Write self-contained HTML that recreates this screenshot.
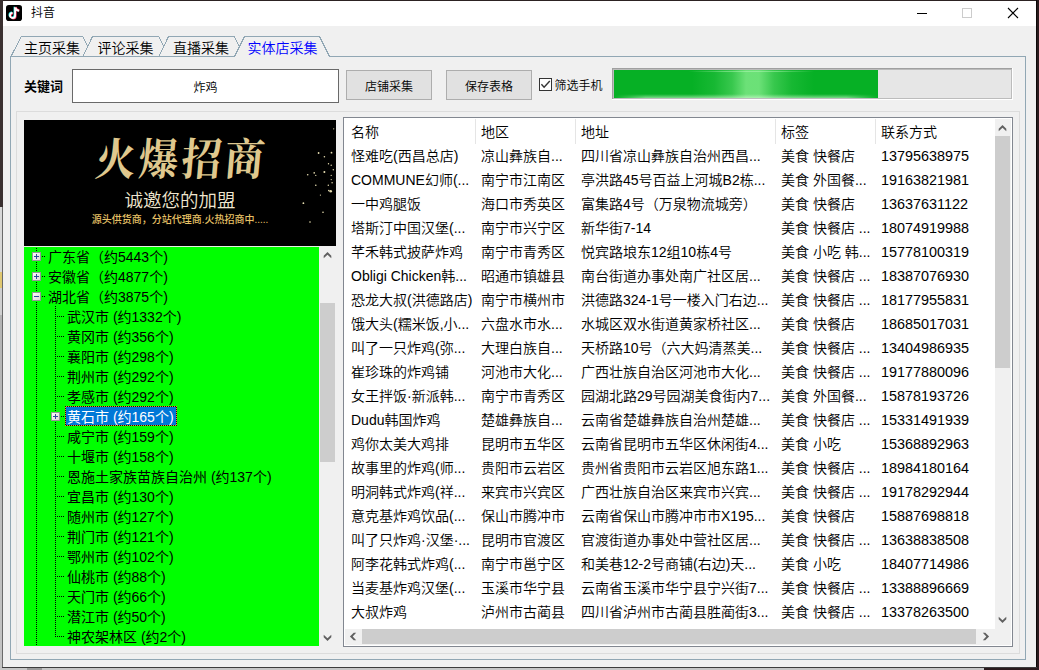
<!DOCTYPE html>
<html lang="zh-CN"><head><meta charset="utf-8"><title>抖音</title>
<style>
html,body{margin:0;padding:0}
body{width:1039px;height:670px;overflow:hidden;position:relative;background:#f0f0f0;
 font-family:"Liberation Sans","Noto Sans CJK SC",sans-serif;color:#000;font-size:12px;font-weight:350}
.a{position:absolute}
.t{position:absolute;white-space:nowrap;overflow:hidden}
.tab{font-size:14px;line-height:20px;height:20px;top:38px}
.btn{background:#e1e1e1;border:1px solid #adadad;box-sizing:border-box;text-align:center;font-size:12px;line-height:32px;height:30px;top:70px;width:86px;overflow:hidden}
.lv{font-size:14px;line-height:24px;height:24px}
.tr{font-size:14px;line-height:20px;height:20px;font-weight:400}
</style></head><body>

<div class="a" style="left:0;top:0;width:1039px;height:1px;background:#2c2222"></div>
<div class="a" style="left:0;top:0;width:3px;height:207px;background:#3a3030"></div>
<div class="a" style="left:0;top:207px;width:2px;height:463px;background:linear-gradient(#d8d8d8 0,#d8d8d8 65px,#e0c870 65px,#e0c870 81px,#d0d0d0 81px,#d0d0d0 108px,#b4b4b4 108px,#c4c4c4 100%)"></div>
<div class="a" style="left:2px;top:207px;width:1px;height:461px;background:#6a6a6a"></div>
<div class="a" style="left:1036px;top:0;width:1px;height:668px;background:#0c0808"></div>
<div class="a" style="left:1037px;top:0;width:2px;height:670px;background:#2a1a1c"></div>
<div class="a" style="left:2px;top:667px;width:1035px;height:1px;background:#3c3c3c"></div>
<div class="a" style="left:0;top:668px;width:984px;height:2px;background:#c6c6c6"></div>
<div class="a" style="left:27px;top:668px;width:15px;height:2px;background:#9a9a9a"></div>
<div class="a" style="left:984px;top:668px;width:55px;height:2px;background:#2a1a1c"></div>
<div class="a" style="left:3px;top:1px;width:1033px;height:25px;background:#fff"></div>
<svg class="a" style="left:6px;top:5px" width="16" height="16" viewBox="0 0 16 16"><rect width="16" height="16" rx="2.8" fill="#000"/>
<g fill="none" stroke-width="1.9" stroke-linecap="butt">
<path d="M9.1 2.2V10.4a2.55 2.55 0 1 1-2.55-2.55" stroke="#25f4ee" transform="translate(-0.6,-0.5)"/>
<path d="M9.1 2.2V10.4a2.55 2.55 0 1 1-2.55-2.55" stroke="#fe2c55" transform="translate(0.6,0.5)"/>
<path d="M9.1 2.2V10.4a2.55 2.55 0 1 1-2.55-2.55" stroke="#fff"/>
<path d="M9.3 2.5c.4 2 1.7 3.2 3.8 3.3" stroke="#fe2c55" transform="translate(0.4,-0.5)"/>
<path d="M9.3 2.5c.4 2 1.7 3.2 3.8 3.3" stroke="#fff"/>
</g></svg>
<div class="t" style="left:31px;top:4px;font-size:12px;line-height:18px;height:18px">抖音</div>
<svg class="a" style="left:900px;top:1px" width="136" height="25" viewBox="0 0 136 25" shape-rendering="crispEdges">
<rect x="17" y="12" width="10" height="1" fill="#000"/>
<rect x="62.5" y="7.5" width="9" height="9" fill="none" stroke="#ccc" stroke-width="1"/>
<g shape-rendering="geometricPrecision" stroke="#000" stroke-width="1.1"><path d="M108 7L118 17M118 7L108 17"/></g>
</svg>
<div class="a" style="left:10px;top:56px;width:1014px;height:602px;border:1px solid #91a7b4"></div>
<div class="a" style="left:235px;top:56px;width:94px;height:1px;background:#f0f0f0"></div>
<svg class="a" style="left:0;top:30px" width="340" height="30" viewBox="0 30 340 30" fill="none" stroke="#91a7b4" stroke-width="1" shape-rendering="crispEdges">
<path d="M11 56.5L21.2 36.5H82.7L87.6 46"/>
<path d="M83 56.5L92.5 36.5H158.7L163.5 46"/>
<path d="M159 56.5L168.5 36.5H234.2L239 46"/>
<path d="M234.5 56.5L244.5 36.5H319.5L329.5 56.5"/>
</svg>
<div class="t tab" style="left:24px">主页采集</div>
<div class="t tab" style="left:97.5px">评论采集</div>
<div class="t tab" style="left:173px">直播采集</div>
<div class="t tab" style="left:247.5px;color:#0000ff">实体店采集</div>
<div class="t" style="left:24px;top:77px;font-size:13px;font-weight:bold;line-height:20px;height:20px">关键词</div>
<div class="a" style="left:72px;top:69px;width:265px;height:32px;border:1px solid #696969;background:#fff;text-align:center;font-size:12px;line-height:36px;height:32px;overflow:hidden">炸鸡</div>
<div class="a btn" style="left:346px">店铺采集</div>
<div class="a btn" style="left:446px">保存表格</div>
<svg class="a" style="left:539px;top:78px" width="13" height="13" viewBox="0 0 13 13"><rect x=".5" y=".5" width="12" height="12" fill="#fff" stroke="#333"/><path d="M2.4 6.3L5.1 9.2L10.8 3" fill="none" stroke="#333" stroke-width="1.4"/></svg>
<div class="t" style="left:554.5px;top:77px;font-size:12px;line-height:18px;height:18px">筛选手机</div>
<div class="a" style="left:612px;top:68px;width:401px;height:32px;background:#fff"></div>
<div class="a" style="left:612px;top:68px;width:400px;height:31px;background:#a0a0a0"></div>
<div class="a" style="left:613px;top:69px;width:397px;height:28px;border:1px solid #bcbcbc;background:#e6e6e6"></div>
<div class="a" style="left:614px;top:70px;width:264px;height:28px;background:#06b025"></div>
<div class="a" style="left:614px;top:70px;width:264px;height:28px;background:linear-gradient(90deg,rgba(170,255,170,0) 78px,rgba(170,255,170,.1) 100px,rgba(170,255,170,.3) 118px,rgba(170,255,170,.62) 132px,rgba(170,255,170,.62) 145px,rgba(170,255,170,.3) 160px,rgba(170,255,170,.1) 178px,rgba(170,255,170,0) 200px)"></div>
<div class="a" style="left:614px;top:94px;width:264px;height:4px;background:linear-gradient(180deg,rgba(220,255,220,0),rgba(220,255,220,.55));-webkit-mask-image:linear-gradient(90deg,transparent,#000 12%,#000 88%,transparent)"></div>
<div class="a" style="left:614px;top:71px;width:264px;height:1px;background:rgba(200,255,200,.4);-webkit-mask-image:linear-gradient(90deg,transparent 28%,#000 42%,#000 62%,transparent 76%)"></div>
<div class="a" style="left:16px;top:111px;width:1002px;height:541px;border:1px solid #dcdcdc"></div>
<div class="a" style="left:24px;top:120px;width:312px;height:126px;background:#000;overflow:hidden">
<div class="t" style="left:0;width:312px;text-align:center;top:13px;height:56px;line-height:56px;font-size:40px;letter-spacing:3px;text-indent:3px;font-family:'Liberation Serif','Noto Serif CJK SC',serif;font-weight:700;color:#dfc88e;transform:skewX(-5deg) scaleY(1.1)">火爆招商</div>
<div class="t" style="left:0;width:312px;text-align:center;top:69px;height:24px;line-height:24px;font-size:18.5px;color:#efe6cf">诚邀您的加盟</div>
<div class="t" style="left:0;width:312px;text-align:center;top:92px;height:16px;line-height:16px;font-size:10px;font-weight:500;color:#e6c066">源头供货商，分站代理商.火热招商中.....</div>
<svg class="a" style="left:0;top:0" width="312" height="126" viewBox="0 0 312 126" fill="#e6ddb0"><circle cx="309.7" cy="8.8" r="0.6"/><circle cx="294.6" cy="33" r="0.9"/><circle cx="307.5" cy="32.7" r="0.9"/><circle cx="300.4" cy="36.8" r="0.8"/><circle cx="304.5" cy="43.8" r="0.7"/><circle cx="307.2" cy="45.2" r="0.7"/><circle cx="309.3" cy="49.7" r="0.7"/><circle cx="300.4" cy="52" r="1.0"/><circle cx="290.2" cy="52.9" r="0.8"/><circle cx="291.8" cy="55.4" r="0.6"/><circle cx="283.7" cy="54.7" r="0.8"/><circle cx="307.2" cy="55.4" r="0.6"/><circle cx="307.2" cy="59.6" r="0.6"/><circle cx="308.1" cy="62.8" r="0.7"/><circle cx="304.3" cy="65.3" r="0.7"/><circle cx="291.8" cy="65.3" r="0.8"/><circle cx="306.7" cy="71.2" r="1.3"/><circle cx="304.8" cy="70.6" r="0.8"/><circle cx="296.4" cy="75.1" r="0.6"/><circle cx="279.4" cy="83.2" r="0.9"/><circle cx="299" cy="92.2" r="0.8"/><circle cx="286" cy="102" r="0.8"/></svg>
</div>
<div class="a" style="left:24px;top:246px;width:295px;height:400px;background:#00ff00;overflow:hidden">
<div class="a" style="left:0;top:0;width:295px;height:1px;background:#e8f0e0"></div>
<div class="a" style="left:12px;top:2px;width:1px;height:398px;background:repeating-linear-gradient(180deg,#000 0,#000 1px,transparent 1px,transparent 2px)"></div>
<div class="a" style="left:31px;top:60px;width:1px;height:331px;background:repeating-linear-gradient(180deg,#000 0,#000 1px,transparent 1px,transparent 2px)"></div>
<div class="a" style="left:18px;top:10px;width:3px;height:1px;background:repeating-linear-gradient(90deg,#000 0,#000 1px,transparent 1px,transparent 2px)"></div>
<svg class="a" style="left:8px;top:6px" width="9" height="9" viewBox="0 0 9 9" shape-rendering="crispEdges"><defs><linearGradient id="bg0" x1="0" y1="0" x2="1" y2="1"><stop offset="0" stop-color="#fff"/><stop offset="1" stop-color="#d9d6d2"/></linearGradient></defs><rect x=".5" y=".5" width="8" height="8" fill="url(#bg0)" stroke="#979797"/><rect x="2" y="4" width="5" height="1" fill="#2f4a9c"/><rect x="4" y="2" width="1" height="5" fill="#2f4a9c"/></svg>
<div class="t tr" style="left:24px;top:1px">广东省（约5443个)</div>
<div class="a" style="left:18px;top:30px;width:3px;height:1px;background:repeating-linear-gradient(90deg,#000 0,#000 1px,transparent 1px,transparent 2px)"></div>
<svg class="a" style="left:8px;top:26px" width="9" height="9" viewBox="0 0 9 9" shape-rendering="crispEdges"><defs><linearGradient id="bg1" x1="0" y1="0" x2="1" y2="1"><stop offset="0" stop-color="#fff"/><stop offset="1" stop-color="#d9d6d2"/></linearGradient></defs><rect x=".5" y=".5" width="8" height="8" fill="url(#bg1)" stroke="#979797"/><rect x="2" y="4" width="5" height="1" fill="#2f4a9c"/><rect x="4" y="2" width="1" height="5" fill="#2f4a9c"/></svg>
<div class="t tr" style="left:24px;top:21px">安徽省（约4877个)</div>
<div class="a" style="left:18px;top:50px;width:3px;height:1px;background:repeating-linear-gradient(90deg,#000 0,#000 1px,transparent 1px,transparent 2px)"></div>
<svg class="a" style="left:8px;top:46px" width="9" height="9" viewBox="0 0 9 9" shape-rendering="crispEdges"><defs><linearGradient id="bg2" x1="0" y1="0" x2="1" y2="1"><stop offset="0" stop-color="#fff"/><stop offset="1" stop-color="#d9d6d2"/></linearGradient></defs><rect x=".5" y=".5" width="8" height="8" fill="url(#bg2)" stroke="#979797"/><rect x="2" y="4" width="5" height="1" fill="#2f4a9c"/></svg>
<div class="t tr" style="left:24px;top:41px">湖北省（约3875个)</div>
<div class="a" style="left:33px;top:70px;width:7px;height:1px;background:repeating-linear-gradient(90deg,#000 0,#000 1px,transparent 1px,transparent 2px)"></div>
<div class="t tr" style="left:43px;top:61px">武汉市 (约1332个)</div>
<div class="a" style="left:33px;top:90px;width:7px;height:1px;background:repeating-linear-gradient(90deg,#000 0,#000 1px,transparent 1px,transparent 2px)"></div>
<div class="t tr" style="left:43px;top:81px">黄冈市 (约356个)</div>
<div class="a" style="left:33px;top:110px;width:7px;height:1px;background:repeating-linear-gradient(90deg,#000 0,#000 1px,transparent 1px,transparent 2px)"></div>
<div class="t tr" style="left:43px;top:101px">襄阳市 (约298个)</div>
<div class="a" style="left:33px;top:130px;width:7px;height:1px;background:repeating-linear-gradient(90deg,#000 0,#000 1px,transparent 1px,transparent 2px)"></div>
<div class="t tr" style="left:43px;top:121px">荆州市 (约292个)</div>
<div class="a" style="left:33px;top:150px;width:7px;height:1px;background:repeating-linear-gradient(90deg,#000 0,#000 1px,transparent 1px,transparent 2px)"></div>
<div class="t tr" style="left:43px;top:141px">孝感市 (约292个)</div>
<div class="a" style="left:33px;top:170px;width:7px;height:1px;background:repeating-linear-gradient(90deg,#000 0,#000 1px,transparent 1px,transparent 2px)"></div>
<svg class="a" style="left:27px;top:166px" width="9" height="9" viewBox="0 0 9 9" shape-rendering="crispEdges"><defs><linearGradient id="bg8" x1="0" y1="0" x2="1" y2="1"><stop offset="0" stop-color="#fff"/><stop offset="1" stop-color="#d9d6d2"/></linearGradient></defs><rect x=".5" y=".5" width="8" height="8" fill="url(#bg8)" stroke="#979797"/><rect x="2" y="4" width="5" height="1" fill="#2f4a9c"/><rect x="4" y="2" width="1" height="5" fill="#2f4a9c"/></svg>
<div class="a" style="left:41px;top:160px;width:112px;height:20px;background:repeating-conic-gradient(#e8912c 0 25%,#181008 0 50%) 0 0/2px 2px"><div class="t tr" style="left:1px;top:1px;width:109px;height:18px;line-height:20px;background:#0078d7;color:#fff;padding-left:1px">黄石市 (约165个)</div></div>
<div class="a" style="left:33px;top:190px;width:7px;height:1px;background:repeating-linear-gradient(90deg,#000 0,#000 1px,transparent 1px,transparent 2px)"></div>
<div class="t tr" style="left:43px;top:181px">咸宁市 (约159个)</div>
<div class="a" style="left:33px;top:210px;width:7px;height:1px;background:repeating-linear-gradient(90deg,#000 0,#000 1px,transparent 1px,transparent 2px)"></div>
<div class="t tr" style="left:43px;top:201px">十堰市 (约158个)</div>
<div class="a" style="left:33px;top:230px;width:7px;height:1px;background:repeating-linear-gradient(90deg,#000 0,#000 1px,transparent 1px,transparent 2px)"></div>
<div class="t tr" style="left:43px;top:221px">恩施土家族苗族自治州 (约137个)</div>
<div class="a" style="left:33px;top:250px;width:7px;height:1px;background:repeating-linear-gradient(90deg,#000 0,#000 1px,transparent 1px,transparent 2px)"></div>
<div class="t tr" style="left:43px;top:241px">宜昌市 (约130个)</div>
<div class="a" style="left:33px;top:270px;width:7px;height:1px;background:repeating-linear-gradient(90deg,#000 0,#000 1px,transparent 1px,transparent 2px)"></div>
<div class="t tr" style="left:43px;top:261px">随州市 (约127个)</div>
<div class="a" style="left:33px;top:290px;width:7px;height:1px;background:repeating-linear-gradient(90deg,#000 0,#000 1px,transparent 1px,transparent 2px)"></div>
<div class="t tr" style="left:43px;top:281px">荆门市 (约121个)</div>
<div class="a" style="left:33px;top:310px;width:7px;height:1px;background:repeating-linear-gradient(90deg,#000 0,#000 1px,transparent 1px,transparent 2px)"></div>
<div class="t tr" style="left:43px;top:301px">鄂州市 (约102个)</div>
<div class="a" style="left:33px;top:330px;width:7px;height:1px;background:repeating-linear-gradient(90deg,#000 0,#000 1px,transparent 1px,transparent 2px)"></div>
<div class="t tr" style="left:43px;top:321px">仙桃市 (约88个)</div>
<div class="a" style="left:33px;top:350px;width:7px;height:1px;background:repeating-linear-gradient(90deg,#000 0,#000 1px,transparent 1px,transparent 2px)"></div>
<div class="t tr" style="left:43px;top:341px">天门市 (约66个)</div>
<div class="a" style="left:33px;top:370px;width:7px;height:1px;background:repeating-linear-gradient(90deg,#000 0,#000 1px,transparent 1px,transparent 2px)"></div>
<div class="t tr" style="left:43px;top:361px">潜江市 (约50个)</div>
<div class="a" style="left:33px;top:390px;width:7px;height:1px;background:repeating-linear-gradient(90deg,#000 0,#000 1px,transparent 1px,transparent 2px)"></div>
<div class="t tr" style="left:43px;top:381px">神农架林区 (约2个)</div>
</div>
<div class="a" style="left:319px;top:246px;width:17px;height:400px;background:#f0f0f0"></div>
<div class="a" style="left:320px;top:303px;width:15px;height:159px;background:#cdcdcd"></div>
<svg class="a" style="left:323px;top:251px" width="9" height="9" viewBox="0 0 9 9"><polygon points="0.7,4.7 4.5,0.9 8.3,4.7 8.3,7.2 4.5,3.7 0.7,7.2" fill="#606060"/></svg>
<svg class="a" style="left:323px;top:634px" width="9" height="9" viewBox="0 0 9 9"><polygon points="0.7,0.8 4.5,4.3 8.3,0.8 8.3,3.3 4.5,7.1 0.7,3.3" fill="#606060"/></svg>
<div class="a" style="left:343px;top:117px;width:668px;height:528px;border:1px solid #828790;background:#fff"></div>
<div class="t lv" style="left:351px;top:120px;width:122px">名称</div>
<div class="t lv" style="left:481px;top:120px;width:92px">地区</div>
<div class="t lv" style="left:581px;top:120px;width:192px">地址</div>
<div class="t lv" style="left:781px;top:120px;width:92px">标签</div>
<div class="t lv" style="left:881px;top:120px;width:110px">联系方式</div>
<div class="a" style="left:475px;top:119px;width:1px;height:25px;background:#e5e5e5"></div>
<div class="a" style="left:575px;top:119px;width:1px;height:25px;background:#e5e5e5"></div>
<div class="a" style="left:775px;top:119px;width:1px;height:25px;background:#e5e5e5"></div>
<div class="a" style="left:875px;top:119px;width:1px;height:25px;background:#e5e5e5"></div>
<div class="t lv" style="left:351px;top:144px;width:122px">怪难吃(西昌总店)</div>
<div class="t lv" style="left:481px;top:144px;width:92px">凉山彝族自...</div>
<div class="t lv" style="left:581px;top:144px;width:192px">四川省凉山彝族自治州西昌...</div>
<div class="t lv" style="left:781px;top:144px;width:92px">美食 快餐店</div>
<div class="t lv" style="left:881px;top:144px;width:110px;font-size:14.4px">13795638975</div>
<div class="t lv" style="left:351px;top:168px;width:122px">COMMUNE幻师(...</div>
<div class="t lv" style="left:481px;top:168px;width:92px">南宁市江南区</div>
<div class="t lv" style="left:581px;top:168px;width:192px">亭洪路45号百益上河城B2栋...</div>
<div class="t lv" style="left:781px;top:168px;width:92px">美食 外国餐...</div>
<div class="t lv" style="left:881px;top:168px;width:110px;font-size:14.4px">19163821981</div>
<div class="t lv" style="left:351px;top:192px;width:122px">一中鸡腿饭</div>
<div class="t lv" style="left:481px;top:192px;width:92px">海口市秀英区</div>
<div class="t lv" style="left:581px;top:192px;width:192px">富集路4号（万泉物流城旁）</div>
<div class="t lv" style="left:781px;top:192px;width:92px">美食 快餐店</div>
<div class="t lv" style="left:881px;top:192px;width:110px;font-size:14.4px">13637631122</div>
<div class="t lv" style="left:351px;top:216px;width:122px">塔斯汀中国汉堡(...</div>
<div class="t lv" style="left:481px;top:216px;width:92px">南宁市兴宁区</div>
<div class="t lv" style="left:581px;top:216px;width:192px">新华街7-14</div>
<div class="t lv" style="left:781px;top:216px;width:92px">美食 快餐店 ...</div>
<div class="t lv" style="left:881px;top:216px;width:110px;font-size:14.4px">18074919988</div>
<div class="t lv" style="left:351px;top:240px;width:122px">芊禾韩式披萨炸鸡</div>
<div class="t lv" style="left:481px;top:240px;width:92px">南宁市青秀区</div>
<div class="t lv" style="left:581px;top:240px;width:192px">悦宾路埌东12组10栋4号</div>
<div class="t lv" style="left:781px;top:240px;width:92px">美食 小吃 韩...</div>
<div class="t lv" style="left:881px;top:240px;width:110px;font-size:14.4px">15778100319</div>
<div class="t lv" style="left:351px;top:264px;width:122px">Obligi Chicken韩...</div>
<div class="t lv" style="left:481px;top:264px;width:92px">昭通市镇雄县</div>
<div class="t lv" style="left:581px;top:264px;width:192px">南台街道办事处南广社区居...</div>
<div class="t lv" style="left:781px;top:264px;width:92px">美食 快餐店 ...</div>
<div class="t lv" style="left:881px;top:264px;width:110px;font-size:14.4px">18387076930</div>
<div class="t lv" style="left:351px;top:288px;width:122px">恐龙大叔(洪德路店)</div>
<div class="t lv" style="left:481px;top:288px;width:92px">南宁市横州市</div>
<div class="t lv" style="left:581px;top:288px;width:192px">洪德路324-1号一楼入门右边...</div>
<div class="t lv" style="left:781px;top:288px;width:92px">美食 快餐店 ...</div>
<div class="t lv" style="left:881px;top:288px;width:110px;font-size:14.4px">18177955831</div>
<div class="t lv" style="left:351px;top:312px;width:122px">饿大头(糯米饭,小...</div>
<div class="t lv" style="left:481px;top:312px;width:92px">六盘水市水...</div>
<div class="t lv" style="left:581px;top:312px;width:192px">水城区双水街道黄家桥社区...</div>
<div class="t lv" style="left:781px;top:312px;width:92px">美食 快餐店</div>
<div class="t lv" style="left:881px;top:312px;width:110px;font-size:14.4px">18685017031</div>
<div class="t lv" style="left:351px;top:336px;width:122px">叫了一只炸鸡(弥...</div>
<div class="t lv" style="left:481px;top:336px;width:92px">大理白族自...</div>
<div class="t lv" style="left:581px;top:336px;width:192px">天桥路10号（六大妈清蒸美...</div>
<div class="t lv" style="left:781px;top:336px;width:92px">美食 快餐店 ...</div>
<div class="t lv" style="left:881px;top:336px;width:110px;font-size:14.4px">13404986935</div>
<div class="t lv" style="left:351px;top:360px;width:122px">崔珍珠的炸鸡铺</div>
<div class="t lv" style="left:481px;top:360px;width:92px">河池市大化...</div>
<div class="t lv" style="left:581px;top:360px;width:192px">广西壮族自治区河池市大化...</div>
<div class="t lv" style="left:781px;top:360px;width:92px">美食 快餐店 ...</div>
<div class="t lv" style="left:881px;top:360px;width:110px;font-size:14.4px">19177880096</div>
<div class="t lv" style="left:351px;top:384px;width:122px">女王拌饭·新派韩...</div>
<div class="t lv" style="left:481px;top:384px;width:92px">南宁市青秀区</div>
<div class="t lv" style="left:581px;top:384px;width:192px">园湖北路29号园湖美食街内7...</div>
<div class="t lv" style="left:781px;top:384px;width:92px">美食 外国餐...</div>
<div class="t lv" style="left:881px;top:384px;width:110px;font-size:14.4px">15878193726</div>
<div class="t lv" style="left:351px;top:408px;width:122px">Dudu韩国炸鸡</div>
<div class="t lv" style="left:481px;top:408px;width:92px">楚雄彝族自...</div>
<div class="t lv" style="left:581px;top:408px;width:192px">云南省楚雄彝族自治州楚雄...</div>
<div class="t lv" style="left:781px;top:408px;width:92px">美食 快餐店 ...</div>
<div class="t lv" style="left:881px;top:408px;width:110px;font-size:14.4px">15331491939</div>
<div class="t lv" style="left:351px;top:432px;width:122px">鸡你太美大鸡排</div>
<div class="t lv" style="left:481px;top:432px;width:92px">昆明市五华区</div>
<div class="t lv" style="left:581px;top:432px;width:192px">云南省昆明市五华区休闲街4...</div>
<div class="t lv" style="left:781px;top:432px;width:92px">美食 小吃</div>
<div class="t lv" style="left:881px;top:432px;width:110px;font-size:14.4px">15368892963</div>
<div class="t lv" style="left:351px;top:456px;width:122px">故事里的炸鸡(师...</div>
<div class="t lv" style="left:481px;top:456px;width:92px">贵阳市云岩区</div>
<div class="t lv" style="left:581px;top:456px;width:192px">贵州省贵阳市云岩区旭东路1...</div>
<div class="t lv" style="left:781px;top:456px;width:92px">美食 快餐店 ...</div>
<div class="t lv" style="left:881px;top:456px;width:110px;font-size:14.4px">18984180164</div>
<div class="t lv" style="left:351px;top:480px;width:122px">明洞韩式炸鸡(祥...</div>
<div class="t lv" style="left:481px;top:480px;width:92px">来宾市兴宾区</div>
<div class="t lv" style="left:581px;top:480px;width:192px">广西壮族自治区来宾市兴宾...</div>
<div class="t lv" style="left:781px;top:480px;width:92px">美食 快餐店 ...</div>
<div class="t lv" style="left:881px;top:480px;width:110px;font-size:14.4px">19178292944</div>
<div class="t lv" style="left:351px;top:504px;width:122px">意克基炸鸡饮品(...</div>
<div class="t lv" style="left:481px;top:504px;width:92px">保山市腾冲市</div>
<div class="t lv" style="left:581px;top:504px;width:192px">云南省保山市腾冲市市X195...</div>
<div class="t lv" style="left:781px;top:504px;width:92px">美食 快餐店</div>
<div class="t lv" style="left:881px;top:504px;width:110px;font-size:14.4px">15887698818</div>
<div class="t lv" style="left:351px;top:528px;width:122px">叫了只炸鸡·汉堡·...</div>
<div class="t lv" style="left:481px;top:528px;width:92px">昆明市官渡区</div>
<div class="t lv" style="left:581px;top:528px;width:192px">官渡街道办事处中营社区居...</div>
<div class="t lv" style="left:781px;top:528px;width:92px">美食 快餐店 ...</div>
<div class="t lv" style="left:881px;top:528px;width:110px;font-size:14.4px">13638838508</div>
<div class="t lv" style="left:351px;top:552px;width:122px">阿李花韩式炸鸡(...</div>
<div class="t lv" style="left:481px;top:552px;width:92px">南宁市邕宁区</div>
<div class="t lv" style="left:581px;top:552px;width:192px">和美巷12-2号商铺(右边)天...</div>
<div class="t lv" style="left:781px;top:552px;width:92px">美食 小吃</div>
<div class="t lv" style="left:881px;top:552px;width:110px;font-size:14.4px">18407714986</div>
<div class="t lv" style="left:351px;top:576px;width:122px">当麦基炸鸡汉堡(...</div>
<div class="t lv" style="left:481px;top:576px;width:92px">玉溪市华宁县</div>
<div class="t lv" style="left:581px;top:576px;width:192px">云南省玉溪市华宁县宁兴街7...</div>
<div class="t lv" style="left:781px;top:576px;width:92px">美食 快餐店 ...</div>
<div class="t lv" style="left:881px;top:576px;width:110px;font-size:14.4px">13388896669</div>
<div class="t lv" style="left:351px;top:600px;width:122px">大叔炸鸡</div>
<div class="t lv" style="left:481px;top:600px;width:92px">泸州市古蔺县</div>
<div class="t lv" style="left:581px;top:600px;width:192px">四川省泸州市古蔺县胜蔺街3...</div>
<div class="t lv" style="left:781px;top:600px;width:92px">美食 快餐店 ...</div>
<div class="t lv" style="left:881px;top:600px;width:110px;font-size:14.4px">13378263500</div>
<div class="a" style="left:995px;top:119px;width:16px;height:510px;background:#f0f0f0"></div>
<div class="a" style="left:995px;top:136px;width:15px;height:232px;background:#cdcdcd"></div>
<svg class="a" style="left:998px;top:124px" width="9" height="9" viewBox="0 0 9 9"><polygon points="0.7,4.7 4.5,0.9 8.3,4.7 8.3,7.2 4.5,3.7 0.7,7.2" fill="#606060"/></svg>
<svg class="a" style="left:998px;top:616px" width="9" height="9" viewBox="0 0 9 9"><polygon points="0.7,0.8 4.5,4.3 8.3,0.8 8.3,3.3 4.5,7.1 0.7,3.3" fill="#606060"/></svg>
<div class="a" style="left:345px;top:629px;width:666px;height:16px;background:#f0f0f0"></div>
<div class="a" style="left:362px;top:629px;width:614px;height:15px;background:#cdcdcd"></div>
<svg class="a" style="left:349px;top:632px" width="9" height="9" viewBox="0 0 9 9"><polygon points="4.7,0.7 0.9,4.5 4.7,8.3 7.2,8.3 3.7,4.5 7.2,0.7" fill="#606060"/></svg>
<svg class="a" style="left:982px;top:632px" width="9" height="9" viewBox="0 0 9 9"><polygon points="0.8,0.7 4.3,4.5 0.8,8.3 3.3,8.3 7.1,4.5 3.3,0.7" fill="#606060"/></svg>
</body></html>
